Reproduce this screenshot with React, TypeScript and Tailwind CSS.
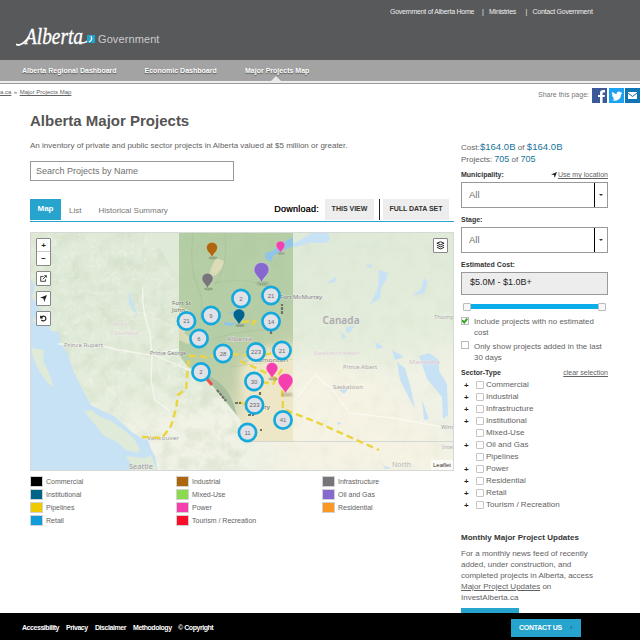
import React from "react";

const clusters: [number, number, string][] = [
  [241, 298.5, "2"], [271, 295.5, "21"], [186.5, 321, "21"], [211, 315.5, "9"],
  [271, 321.5, "14"], [199, 338.5, "6"], [223, 353.5, "28"], [256, 352, "223"],
  [282, 350.5, "21"], [201, 372, "2"], [254, 381.5, "30"], [254.5, 405, "233"],
  [283, 420, "41"], [247.5, 432.5, "11"],
];

const pins: [number, number, number, string][] = [
  [212, 257.5, 1, "#b0660f"], [280.5, 253, 0.78, "#f63fae"], [207.5, 288.5, 1, "#777579"],
  [261.5, 283, 1.35, "#8668cf"], [239, 325, 1.05, "#00658d"], [272, 378.5, 1.05, "#f63fae"],
  [285.5, 394, 1.35, "#f63fae"],
];

const labels: [number, number, number, string, string][] = [
  [64, 347, 39, "Prince Rupert", "#9b97a2"], [150, 355, 36, "Prince George", "#858189"],
  [172, 304.5, 19, "Fort St", "#6f736c"], [172, 311.5, 13, "John", "#6f736c"],
  [280, 298.5, 42, "Fort McMurray", "#7f7b8c"], [343, 368.5, 34, "Prince Albert", "#aaa6ab"],
  [333, 388.5, 30, "Saskatoon", "#aaa6ab"], [314, 355, 46, "Saskatchewan", "#dccdd5"],
  [409, 364, 31, "Manitoba", "#d9c3d2"], [434, 318.5, 23, "Thomps", "#aaa6ab"],
  [441, 429, 14, "Winn", "#a5a1a8"], [442, 448.5, 12, "Inter", "#b5b2bc"],
  [392, 466.5, 19, "North", "#b8b5b8"], [147, 440, 32, "Vancouver", "#a19dab"],
  [129, 468.5, 24, "Seattle", "#9a969f"], [113, 325.5, 18, "British", "#dccbd2"],
  [111, 334.5, 27, "Columbia", "#dccbd2"], [227, 341, 25, "Alberta", "#a894a7"],
  [254, 362, 34, "Edmonton", "#85827c"], [248, 408.5, 22, "Calgary", "#5b595a"],
];

function AlbertaMap() {
  return (
    <svg viewBox="30 232 424 239" className="-ml-px -mt-px block h-[239px] w-[424px] max-w-none">
      <defs>
        <linearGradient id="land" x1="0.35" y1="0.2" x2="0.65" y2="1">
          <stop offset="0" stopColor="#e0ead9" />
          <stop offset="0.48" stopColor="#e5eddc" />
          <stop offset="0.66" stopColor="#f0f2e5" />
          <stop offset="1" stopColor="#eef1e6" />
        </linearGradient>
        <linearGradient id="province" x1="0" y1="0" x2="0.3" y2="1">
          <stop offset="0" stopColor="#b4cea5" />
          <stop offset="0.58" stopColor="#b6cea7" />
          <stop offset="0.8" stopColor="#c3cfab" />
          <stop offset="1" stopColor="#e9e5c9" />
        </linearGradient>
        <filter id="relief" x="0" y="0" width="100%" height="100%" colorInterpolationFilters="sRGB">
          <feTurbulence type="turbulence" baseFrequency="0.075" numOctaves="3" seed="9" />
          <feColorMatrix values="0 0 0 0 .97  0 0 0 0 .97  0 0 0 0 .93  -4 0 0 0 .78" />
        </filter>
        <filter id="shade" x="0" y="0" width="100%" height="100%" colorInterpolationFilters="sRGB">
          <feTurbulence type="fractalNoise" baseFrequency="0.07" numOctaves="3" seed="4" />
          <feColorMatrix values="0 0 0 0 .68  0 0 0 0 .77  0 0 0 0 .62  2.6 0 0 0 -1.1" />
        </filter>
        <filter id="soft"><feGaussianBlur stdDeviation="0.7" /></filter>
        <filter id="edge"><feGaussianBlur stdDeviation="5" /></filter>
        <filter id="wide" x="-20%" y="-20%" width="140%" height="140%"><feGaussianBlur stdDeviation="12" /></filter>
        <clipPath id="mountains"><path d="M30 232H150L179 280V345L205 375L235 420L247 442V471H30Z" /></clipPath>
        <clipPath id="alberta"><path d="M179 233H293V442H247L240 419L222 397L201 372L188 367L179 355Z" /></clipPath>
      </defs>
      <rect x="30" y="232" width="424" height="239" fill="url(#land)" />
      <path d="M290 360C335 350 380 380 400 400S440 430 470 480H270Z" fill="#f6f3e4" filter="url(#wide)" />
      <g clipPath="url(#mountains)">
        <rect x="30" y="232" width="230" height="239" filter="url(#relief)" opacity="0.7" />
        <rect x="30" y="232" width="230" height="239" filter="url(#shade)" opacity="0.2" />
      </g>
      <rect x="179" y="232" width="275" height="239" filter="url(#shade)" opacity="0.08" />

      <g fill="#c7e1f5" filter="url(#soft)">
        <path d="M28 308L34 312L33 322L43 325L48 321L51 331L59 332L61 344L68 354L73 370L79 383L87 398L91 405L103 411L114 416L124 425L132 432L139 437L148 440L151 449L155 456L158 473H28Z" />
        <path d="M29 278L35 285L32 298L38 306L43 318L37 321L28 308ZM47 309L50 320L47 329L44 318Z" />
        <path d="M129 291L133 303L138 316L134 311L129 304Z" />
        <path d="M308 235L318 238L327 240L330 242L319 243L308 242ZM326 284L337 276L335 282ZM365 266L372 264L371 268ZM379 270L388 273L386 280L381 288L380 298L370 305L378 288ZM424 278L428 282L424 293L412 296L421 289ZM347 327L355 326L349 333L345 331Z" />
        <path d="M419 356L429 353L439 360L439 371L447 384L448 415L443 419L442 397L433 386L427 379ZM422 400L429 419L424 420Z" />
        <path d="M397 362L405 368L409 382L412 394L415 409L406 392L400 380ZM339 390L348 389L344 394ZM337 422L342 423L338 425ZM375 342L384 347L377 349ZM392 350L404 357L395 360ZM341 331L346 337L342 339ZM378 455L384 466L392 468L385 469Z" />
        <path d="M293 244L304 238L312 233L328 233L330 240L312 242L292 248Z" />
      </g>
      <g fill="#e0ead8" filter="url(#soft)">
        <path d="M31 348L44 350L43 360L49 373L54 388L47 382L39 371L34 360Z" />
        <path d="M84 411L91 410L99 416L111 421L124 430L134 439L140 449L138 453L126 450L117 442L104 436L96 426Z" />
        <path d="M126 456L144 458L151 455L158 472H129L132 466Z" />
      </g>

      <g clipPath="url(#alberta)">
        <rect x="179" y="233" width="114" height="209" fill="url(#province)" />
        <path d="M240 385C235 355 262 342 305 345V455H252C248 430 244 408 240 385Z" fill="#eee7c7" filter="url(#edge)" />
        <path d="M211 377Q231 388 236 412L246 442L239 424L222 397L200 374Z" fill="#a7bf9e" filter="url(#soft)" />
        <g fill="#dcdcb9" filter="url(#soft)">
          <path d="M216 258L224 261L222 268L216 275L208 278L211 268ZM179 306L190 311L195 322L184 333L193 340L188 344L179 340ZM246 349L255 343L264 351L252 362Z" />
        </g>
        <rect x="179" y="233" width="114" height="120" filter="url(#shade)" opacity="0.22" />
        <path d="M265 253L273 251L276 247L293 237V246L282 251L273 256L271 262L265 258ZM228 313L237 310L241 314ZM224 322L236 323L232 326L224 325ZM242 362L249 360L243 364ZM265 285L275 289L270 292Z" fill="#91c5e8" filter="url(#soft)" />
        <path d="M193 233Q189 270 197 285T200 320M225 233Q229 268 215 285M214 283Q255 275 275 293M200 345Q230 329 274 330M229 367L293 359" fill="none" stroke="#91a987" strokeWidth="0.8" opacity="0.28" />
      </g>
      <path d="M58 344L98 345L119 350L150 355L179 349M143 287Q141 309 150 333L152 355L151 380L155 400L170 411M154 355L196 373M295 400L315 375L333 390L349 413L400 419L442 427" fill="none" stroke="#fcfcf7" strokeWidth="1.3" opacity="0.7" />
      <path d="M247 441.5H454" fill="none" stroke="#cdd2d2" strokeWidth="0.8" />

      {labels.map(([x, y, w, text, fill]) => (
        <text key={text} x={x} y={y} textLength={w} lengthAdjust="spacingAndGlyphs" fill={fill} fontFamily="Noto Sans, sans-serif" fontSize={text === "North" || text === "Seattle" ? 7 : 5.8} stroke="#f4f5eb" strokeOpacity="0.55" strokeWidth="1" paintOrder="stroke">{text}</text>
      ))}
      <text x="322.5" y="323.5" textLength="37" fill="#aaa8af" fontFamily="Noto Sans, sans-serif" fontSize="10" fontWeight="600">Canada</text>

      <g fill="none" stroke="#ecd440" strokeWidth="2.4" strokeDasharray="7 4">
        <path d="M142 437L162 438L171 426L176 409L178 395L186 389L189 356L201 356L208 358L219 353L257 356L280 352" />
        <path d="M252 325L255 321L240 322M240 361L256 368L272 376L282 382L283 409L314 421L379 450M251 380L273 384L282 369M239 402L248 405" />
      </g>
      <path d="M207 379L212 385" stroke="#ed514b" strokeWidth="3" />
      <path d="M217 390L226 401M235 403L241 403M282 314V304M271 334V330M248 415H254M260 395V392M260 430L262 430" stroke="#6f7067" strokeWidth="2.2" strokeDasharray="3 1" fill="none" />

      {clusters.map(([x, y, text]) => (
        <g key={`${x}-${y}`}>
          <circle cx={x} cy={y} r="8.6" fill="#e0e2e7" stroke="#15a9dd" strokeWidth="2.7" />
          <text x={x} y={y + 2.1} textAnchor="middle" fontSize="6" fill="#6a6a6a" fontFamily="Liberation Sans, sans-serif">{text}</text>
        </g>
      ))}
      {pins.map(([x, y, size, color]) => (
        <g key={`${x}-${y}`} transform={`translate(${x} ${y}) scale(${size})`}>
          <ellipse cx="1" cy="0.5" rx="4.5" ry="1.4" fill="#48513f" opacity="0.3" filter="url(#soft)" />
          <path d="M0 0C-1-4-5.5-6-5.5-10A5.5 5.2 0 1 1 5.5-10C5.5-6 1-4 0 0Z" fill={color} stroke="#ffffff" strokeOpacity="0.45" strokeWidth="0.5" />
        </g>
      ))}
    </svg>
  );
}

function MapButton({ children }: { children: React.ReactNode }) {
  return <div className="flex h-[15px] w-[15px] items-center justify-center rounded-[1px] border border-[#888] bg-white text-[#222]">{children}</div>;
}

function MapControls() {
  return (
    <>
      <div className="absolute left-[5px] top-[5px] flex flex-col gap-[5px]">
        <div className="flex h-[28px] w-[15px] flex-col rounded-[1px] border border-[#888] bg-white text-center text-[8px] font-bold leading-[13px] text-[#222]">
          <span className="h-[13px] border-b border-[#ccc]">+</span><span>−</span>
        </div>
        <MapButton><svg viewBox="0 0 10 10" className="h-[7px] w-[7px]" fill="none" stroke="currentColor" strokeWidth="1.2"><path d="M5 2H1V9H8V6M4 6L9 1M6 1H9V4" /></svg></MapButton>
        <MapButton><svg viewBox="0 0 10 10" className="h-[7px] w-[7px]" fill="currentColor"><path d="M10 0L6 10L5 5L0 4Z" /></svg></MapButton>
        <MapButton><svg viewBox="0 0 10 10" className="h-[7px] w-[7px]" fill="none" stroke="currentColor" strokeWidth="1.7"><path d="M2 3A3.5 3.5 0 1 1 2 7M1 1V4H4" /></svg></MapButton>
      </div>
      <div className="absolute right-[5px] top-[5px]">
        <MapButton><svg viewBox="0 0 10 10" className="h-[9px] w-[9px]" fill="none" stroke="currentColor" strokeWidth="1.1"><path d="M1 2.5L5 .8L9 2.5L5 4.2ZM1 4.8L5 6.5L9 4.8M1 7L5 8.8L9 7" /></svg></MapButton>
      </div>
      <span className="absolute bottom-0 right-0 h-[10px] w-[22px] bg-white/70 text-center text-[6px] leading-[10px] text-[#333]">Leaflet</span>
    </>
  );
}

const legend: [string, string][] = [
  ["Commercial", "#000000"], ["Industrial", "#ac660d"], ["Infrastructure", "#777579"],
  ["Institutional", "#006489"], ["Mixed-Use", "#8bd94c"], ["Oil and Gas", "#8668cf"],
  ["Pipelines", "#eecb00"], ["Power", "#f63fae"], ["Residential", "#fb9822"],
  ["Retail", "#129dda"], ["Tourism / Recreation", "#fb0c28"],
];

const sectors = ["Commercial", "Industrial", "Infrastructure", "Institutional", "Mixed-Use", "Oil and Gas", "Pipelines", "Power", "Residential", "Retail", "Tourism / Recreation"];

function SelectBox() {
  return (
    <div className="flex h-[26px] w-[147px] border border-[#999] bg-white text-[9.5px] leading-[23px] text-[#707070]">
      <span className="flex-1 pl-[7px]">All</span>
      <span className="flex w-[13px] items-center justify-center border-l border-black"><span className="border-x-2 border-t-2 border-x-transparent border-t-[#333]" /></span>
    </div>
  );
}

function Sidebar() {
  return (
    <aside className="ml-[7px] w-[150px] pt-[30px] text-[#626262]">
      <div className="h-[12px] whitespace-nowrap text-[8px] leading-[12px] tracking-[0.04px]">Cost:<span className="text-[9.5px] text-[#17739a]">$164.0B</span> of <span className="text-[9.5px] text-[#17739a]">$164.0B</span></div>
      <div className="h-[12px] text-[8px] leading-[12px]">Projects: <span className="text-[9px] text-[#17739a]">705</span> of <span className="text-[9px] text-[#17739a]">705</span></div>
      <div className="mt-[5px] flex h-[12px] w-[147px] items-start justify-between text-[7px] leading-[9px]"><b className="text-[#333]">Municipality:</b><span className="flex items-center"><svg viewBox="0 0 10 10" className="mr-px h-[6px] w-[6px]"><path d="M10 0L6 10L5 5L0 4Z" fill="#222" /></svg><u className="tracking-[0.02px]">Use my location</u></span></div>
      <SelectBox />
      <b className="mt-[7px] block h-[12px] text-[7px] leading-[9px] text-[#333]">Stage:</b>
      <SelectBox />
      <b className="mt-[7px] block h-[12px] text-[7px] leading-[9px] tracking-[0.04px] text-[#333]">Estimated Cost:</b>
      <div className="h-[23px] w-[147px] border border-[#999] bg-[#ededed] pl-[8px] text-[9px] leading-[18px] text-[#222]">$5.0M - $1.0B+</div>
      <div className="mt-[7px] flex h-[9px] w-[147px] items-center px-[2px]">
        <i className="h-[8px] w-[8px] rounded-[1px] border border-[#bbb] bg-[#f7f7f7]" /><i className="h-[5px] flex-1 bg-[#09aeea]" /><i className="h-[8px] w-[8px] rounded-[1px] border border-[#bbb] bg-[#f7f7f7]" />
      </div>
      <div className="mt-[5px] flex h-[24px] gap-[5px] whitespace-nowrap text-[7.9px] leading-[11px]"><span className="mt-px block h-[8px] w-[8px] shrink-0 border border-[#bbb]"><svg viewBox="0 0 8 8"><path d="M0 3L3 6L7 1" fill="none" stroke="#3ba62a" strokeWidth="2.8" /></svg></span><span className="tracking-[0.03px]">Include projects with no estimated<br />cost</span></div>
      <div className="mt-px flex h-[27px] gap-[5px] whitespace-nowrap text-[7.9px] leading-[11px]"><span className="block h-[8px] w-[8px] shrink-0 border border-[#bbb]" /><span className="tracking-[0.03px]">Only show projects added in the last<br />30 days</span></div>
      <div className="flex h-[11px] w-[147px] justify-between text-[7px] leading-[9px]"><b className="text-[#333]">Sector-Type</b><u>clear selection</u></div>
      <div className="w-[147px]">
        {sectors.map((name) => (
          <div key={name} className="flex h-[12px] items-center text-[8px] leading-[12px] tracking-[0.02px]">
            <b className="w-[15px] pl-[3px] text-[8px] leading-[11px] text-[#222]">{name !== "Mixed-Use" && name !== "Pipelines" ? "+" : ""}</b>
            <span className="mr-[2px] h-[8px] w-[8px] rounded-[1px] border border-[#c5c5c5]" />{name}
          </div>
        ))}
      </div>
      <b className="mt-[21px] block whitespace-nowrap text-[8px] leading-[11px] tracking-[0.02px] text-[#343434]">Monthly Major Project Updates</b>
      <p className="mt-[5px] whitespace-nowrap text-[8px] leading-[11px]">For a monthly news feed of recently<br />added, under construction, and<br />completed projects in Alberta, access<br /><u>Major Project Updates</u> on<br />InvestAlberta.ca</p>
      <div className="mt-[5px] h-[14px] w-[58px] bg-[#26a4cd]" />
    </aside>
  );
}

function SocialIcons() {
  return (
    <div className="ml-[3px] flex gap-[1.5px]">
      <svg viewBox="0 0 15 15" className="h-[15px] w-[15px]"><path fill="#3b5998" d="M0 0H15V15H0Z" /><path fill="#fff" d="M8 15V9H6V7H8V5C8 3 9 2 11 2H13V4.5H11.7C11 4.5 10.6 5 10.6 5.6V7H13L12.6 9H10.6V15Z" /></svg>
      <svg viewBox="0 0 15 15" className="h-[15px] w-[15px]"><path fill="#1da1f2" d="M0 0H15V15H0Z" /><path fill="#fff" d="M12 5L13 3.6L11.5 4.2C9.7 2.5 7.4 4 7.7 6C5.8 5.9 4.4 5 3.3 3.8C2.5 5.2 3 6.5 4 7.2L3 7C3 8.3 3.8 9.1 5 9.5H4C4.3 10.5 5.2 11 6.3 11L3 12C8 14 12 11 12 6.5L13.3 5Z" /></svg>
      <svg viewBox="0 0 15 15" className="h-[15px] w-[15px]"><path fill="#0e76b5" d="M0 0H15V15H0Z" /><path d="M3 4H12V11H3Z" fill="#fff" /><path d="M3 5L7.5 8.5L12 5" fill="none" stroke="#0e76b5" /></svg>
    </div>
  );
}

export default function App() {
  return (
    <div className="flex h-[640px] w-[640px] flex-col overflow-hidden bg-white font-['Liberation_Sans',Arial,sans-serif] text-[8px] text-[#626262]">
      <header className="flex h-[60px] shrink-0 justify-between bg-[#58595b] text-white">
        <div className="flex pl-[16px] pt-[23px]">
          <svg viewBox="0 0 80 25" className="h-[25px] w-[80px]" aria-label="Alberta">
            <path d="M0.5 21.5Q5 24 13 14" fill="none" stroke="white" strokeWidth="1.8" strokeLinecap="round" />
            <text x="9" y="20.5" textLength="58" lengthAdjust="spacingAndGlyphs" fill="white" stroke="white" strokeWidth="0.35" fontFamily="Liberation Serif, serif" fontSize="24" fontStyle="italic">Alberta</text>
            <path d="M65 19.5Q71 21 74 14" fill="none" stroke="white" strokeWidth="1.4" strokeLinecap="round" />
            <path d="M71 12H79V20H71Z" fill="#20a5cf" /><path d="M75 13Q77 17 73 19" fill="none" stroke="white" strokeWidth="1.2" />
          </svg>
          <span className="ml-[2px] pt-[9px] text-[11px] leading-[14px] tracking-[0.1px] text-[#ccc]">Government</span>
        </div>
        <div className="flex h-[24px] w-[250px] items-center whitespace-nowrap text-[7px] tracking-[-0.25px] text-[#eee]"><span className="w-[92px]">Government of Alberta Home</span><span className="w-[7px]">|</span><span className="w-[36.5px]">Ministries</span><span className="w-[7px]">|</span><span>Contact Government</span></div>
      </header>
      <nav className="relative flex h-[21px] shrink-0 bg-[#a3a3a3] pl-[22px] text-[7px] font-bold leading-[21px] text-white [text-shadow:0_1px_1px_#555]">
        <span className="w-[122.5px] tracking-[0.02px]">Alberta Regional Dashboard</span><span className="w-[100.5px] tracking-[0.02px]">Economic Dashboard</span><span className="tracking-[0.01px]">Major Projects Map</span>
        <i className="absolute bottom-0 left-[271px] border-x-[5px] border-b-[5px] border-x-transparent border-b-[#e8e8e8]" />
      </nav>
      <div className="h-[3px] shrink-0 border-b border-[#999] bg-[#eeeeee]" />
      <div className="flex h-[27px] shrink-0 justify-between">
        <div className="pt-[4px] text-[6px] leading-[8px]"><u>a.ca</u><span className="mx-[2.5px]">»</span><u>Major Projects Map</u></div>
        <div className="flex items-start pt-[4px]"><span className="text-[7px] leading-[14px] text-[#777]">Share this page:</span><SocialIcons /></div>
      </div>
      <main className="flex h-[502px] shrink-0 overflow-hidden pl-[30px]">
        <section className="w-[424px]">
          <h1 className="h-[28px] text-[15px] font-bold leading-[20px] text-[#555]">Alberta Major Projects</h1>
          <p className="h-[22px] whitespace-nowrap text-[8px] leading-[13px]">An inventory of private and public sector projects in Alberta valued at $5 million or greater.</p>
          <div className="h-[20px] w-[204px] border border-[#999] pl-[5px] text-[9px] leading-[18px] text-[#707070]">Search Projects by Name</div>
          <div className="mt-[18px] flex h-[23px] w-[424px] items-start border-b border-[#26a4cd] text-[8px] text-[#777]">
            <b className="h-[21px] w-[31px] bg-[#26a4cd] text-center leading-[20px] text-white">Map</b><span className="ml-[8px] pt-[4px] leading-[15px]">List</span><span className="ml-[17px] whitespace-nowrap pt-[4px] leading-[15px]">Historical Summary</span>
            <span className="ml-auto mr-[6px] text-[9px] leading-[20px] tracking-[0.25px] text-[#111] [text-shadow:0_0_0.4px_#111]">Download:</span><b className="mr-[5px] h-[21px] w-[49px] bg-[#ededed] text-center text-[7px] leading-[20px] text-[#333]">THIS VIEW</b><i className="h-[21px] w-px bg-[#222]" /><b className="ml-[3px] mr-[5px] h-[21px] w-[66px] bg-[#ededed] text-center text-[7px] leading-[20px] tracking-[-0.05px] text-[#333]">FULL DATA SET</b>
          </div>
          <div className="relative mt-[10px] h-[239px] w-[424px] overflow-hidden border border-[#d7d9d6]"><AlbertaMap /><MapControls /></div>
          <div className="mt-[4px] grid grid-cols-[146px_146px_132px] text-[7px]">
            {legend.map(([name, color]) => <div key={name} className="flex h-[13px] items-center"><svg viewBox="0 0 13 11" className="mr-[3px] h-[11px] w-[13px]"><rect x="0.5" y="0.5" width="12" height="10" fill={color} stroke="#d2d2d2" /></svg><span className="pt-px">{name}</span></div>)}
          </div>
        </section>
        <Sidebar />
      </main>
      <footer className="flex h-[27px] shrink-0 items-center bg-black text-[7px] text-white">
        <div className="flex w-[511px] whitespace-nowrap pl-[22px] pt-[3px] font-bold tracking-[-0.45px]"><span className="w-[44px]">Accessibility</span><span className="w-[29px]">Privacy</span><span className="w-[38px]">Disclaimer</span><span className="w-[45px]">Methodology</span><span>© Copyright</span></div>
        <div className="mt-[3px] flex h-[18px] w-[70px] items-center bg-[#26a4cd] pl-[8px] font-bold"><span className="w-[51px] tracking-[-0.25px]">CONTACT US</span><span className="font-normal text-[#124e66]">›</span></div>
      </footer>
    </div>
  );
}
